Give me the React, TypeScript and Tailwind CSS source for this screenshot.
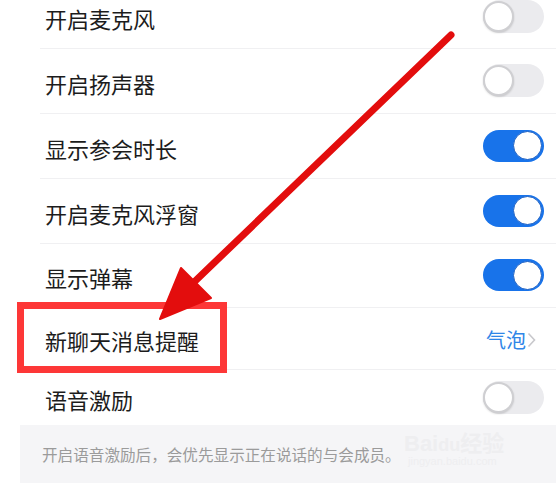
import React from "react";

const font = { fontFamily: '"Noto Sans CJK SC", "Noto Sans", sans-serif' };

function Toggle({ on }: { on: boolean }) {
  if (on) {
    return (
      <div className="flex h-[32px] w-[61px] items-center justify-end rounded-full bg-[#1873ea] pr-[2px]">
        <div className="h-[29px] w-[29px] rounded-full border-[1.5px] border-[#1a5fc4] bg-white" />
      </div>
    );
  }
  return (
    <div className="flex h-[33px] w-[61px] items-center rounded-full bg-[#ebebee]">
      <div className="h-[31px] w-[31px] rounded-full border-[2px] border-[#cfcfd2] bg-white shadow-[0_1px_2px_rgba(0,0,0,0.15)]" />
    </div>
  );
}

type Row = { label: string; h: string; toggle?: boolean; value?: string; last?: boolean };

const rows: Row[] = [
  { label: "开启麦克风", h: "h-[64px]", toggle: false },
  { label: "开启扬声器", h: "h-[65px]", toggle: false },
  { label: "显示参会时长", h: "h-[65px]", toggle: true },
  { label: "开启麦克风浮窗", h: "h-[65px]", toggle: true },
  { label: "显示弹幕", h: "h-[64px]", toggle: true },
  { label: "新聊天消息提醒", h: "h-[62px]", value: "气泡" },
  { label: "语音激励", h: "h-[55px]", toggle: false, last: true },
];

export default function App() {
  return (
    <div className="relative h-[488px] w-[556px] overflow-hidden bg-white" style={font}>
      <div className="-mt-[15px] flex flex-col pl-[40px]">
        {rows.map((r, i) => (
          <div
            key={i}
            className={`flex ${r.h} items-center justify-between ${r.last ? "" : "border-b border-[#f0f0f2]"}`}
          >
            <span className="pl-[5px] pt-[3px] text-[22px] leading-none text-[#1c1c1c]">{r.label}</span>
            <div className="pr-[12px] pb-[1px]">
              {r.value ? (
                <div className="flex items-center pr-[8px] pt-[3px]">
                  <span className="text-[20px] leading-none text-[#2f86e8]">{r.value}</span>
                  <svg width="9" height="16" viewBox="0 0 9 16" className="ml-[1px]">
                    <path d="M1.5 1.5 L7.5 8 L1.5 14.5" fill="none" stroke="#c8c8cc" strokeWidth="1.6" />
                  </svg>
                </div>
              ) : (
                <Toggle on={!!r.toggle} />
              )}
            </div>
          </div>
        ))}
      </div>
      <div className="ml-[20px] flex h-[58px] items-center bg-[#f5f5f7] pl-[22px]">
        <span className="pt-[2px] text-[15.6px] leading-none text-[#9b9b9b]">
          开启语音激励后，会优先显示正在说话的与会成员。
        </span>
      </div>

      {/* Baidu watermark */}
      <div className="absolute left-[404px] top-[433px] flex flex-col items-start leading-none">
        <span className="text-[22px] font-bold text-[#eeeef0]" style={{ fontFamily: '"Liberation Sans", "Noto Sans CJK SC", sans-serif' }}>
          Bai<span className="text-[18px]">du</span>经验
        </span>
        <span className="mt-[1px] pl-[4px] text-[11px] text-[#eeeef0]" style={{ fontFamily: '"Liberation Sans", sans-serif' }}>
          jingyan.baidu.com
        </span>
      </div>

      {/* red highlight box */}
      <div className="absolute left-[17px] top-[302px] h-[71px] w-[210px] border-[7px] border-[#fd3737]" />

      {/* red arrow */}
      <svg className="absolute left-0 top-0" width="556" height="488" viewBox="0 0 556 488">
        <line x1="451" y1="35" x2="190" y2="286" stroke="#e30d0d" strokeWidth="7" strokeLinecap="round" />
        <polygon points="160,319 181,268 211,298" fill="#e30d0d" stroke="#e30d0d" strokeWidth="2" strokeLinejoin="round" />
      </svg>
    </div>
  );
}
